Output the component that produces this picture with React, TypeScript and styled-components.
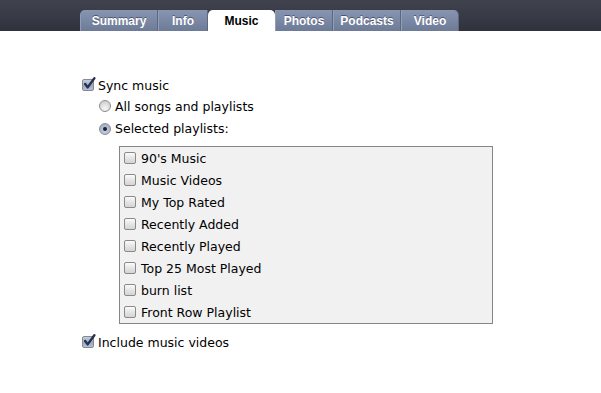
import styled, { createGlobalStyle } from 'styled-components';

const GlobalStyle = createGlobalStyle`
  html, body {
    margin: 0;
    padding: 0;
    background: #ffffff;
  }
  body {
    font-family: "DejaVu Sans", "Noto Sans", sans-serif;
    font-size: 12.5px;
    color: #000;
  }
`;

// Top bar with the device tabs
const Header = styled.div`
  height: 31px;
  display: flex;
  align-items: flex-end;
  padding-left: 80px;
  background: linear-gradient(to bottom, #40434e 0%, #373a45 60%, #2f323c 100%);
`;

const TabStrip = styled.div`
  display: flex;
  height: 21px;
`;

const Tab = styled.div<{ $active?: boolean; $first?: boolean; $last?: boolean; $w: number }>`
  width: ${(p) => p.$w}px;
  box-sizing: border-box;
  display: flex;
  align-items: center;
  justify-content: center;
  padding-top: 1px;
  font-family: "Liberation Sans", Arial, sans-serif;
  font-weight: bold;
  font-size: 12px;
  color: ${(p) => (p.$active ? '#000' : '#fff')};
  text-shadow: ${(p) => (p.$active ? 'none' : '0 -1px 0 rgba(40,48,66,0.6)')};
  background: ${(p) =>
    p.$active
      ? '#ffffff'
      : 'linear-gradient(to bottom, #8795b1 0%, #7a88a5 50%, #6e7b97 100%)'};
  border-right: ${(p) => (p.$active ? 'none' : '1px solid #5c6780')};
  border-left: ${(p) => (p.$active ? 'none' : '1px solid #909db7')};
  border-top-left-radius: ${(p) => (p.$first || p.$active ? '5px' : '0')};
  border-top-right-radius: ${(p) => (p.$last || p.$active ? '5px' : '0')};
`;

const Content = styled.div`
  padding: 43px 0 0 82px;
`;

const Row = styled.label<{ $indent?: number; $h?: number }>`
  display: flex;
  align-items: center;
  gap: 4px;
  height: ${(p) => p.$h ?? 22}px;
  padding-left: ${(p) => p.$indent ?? 0}px;
  white-space: nowrap;
`;

const ListBox = styled.div`
  margin: 5px 0 7px 37px;
  width: 374px;
  box-sizing: border-box;
  border: 1px solid #858585;
  background: #f1f1f1;
  padding: 0 0 0 4px;
`;

const ListRow = styled(Row)`
  gap: 5px;
`;

const Box = styled.span<{ $checked?: boolean }>`
  width: 12px;
  height: 12px;
  flex: none;
  box-sizing: border-box;
  border: 1px solid #8a8a8a;
  border-radius: 2px;
  position: relative;
  background: ${(p) =>
    p.$checked
      ? 'linear-gradient(to bottom, #c3cde0 0%, #9ba9c5 55%, #b3bfd6 100%)'
      : 'linear-gradient(to bottom, #fbfbfb 0%, #e3e3e3 55%, #d4d4d4 100%)'};

  svg {
    position: absolute;
    left: 0;
    top: -3px;
  }
`;

const Radio = styled.span<{ $on?: boolean }>`
  width: 12px;
  height: 12px;
  flex: none;
  box-sizing: border-box;
  border: 1px solid #8d8d8d;
  border-radius: 50%;
  display: flex;
  align-items: center;
  justify-content: center;
  background: ${(p) =>
    p.$on
      ? 'radial-gradient(circle at 50% 70%, #c6d0e2 0%, #a5b2cb 70%)'
      : 'radial-gradient(circle at 50% 75%, #f7f7f7 0%, #d2d2d2 75%)'};

  &::after {
    content: '';
    display: ${(p) => (p.$on ? 'block' : 'none')};
    width: 4px;
    height: 4px;
    border-radius: 50%;
    background: #1d2230;
  }
`;

const Check = ({ checked }: { checked?: boolean }) => (
  <Box $checked={checked}>
    {checked && (
      <svg width="13" height="13" viewBox="0 0 12 12">
        <path d="M2 6.5 L4.3 9.6 L10.5 1.2" fill="none" stroke="#24314f" strokeWidth="2.2" strokeLinecap="round" strokeLinejoin="round" />
      </svg>
    )}
  </Box>
);

const tabs = [
  { name: 'Summary', w: 78 },
  { name: 'Info', w: 50 },
  { name: 'Music', w: 67 },
  { name: 'Photos', w: 58 },
  { name: 'Podcasts', w: 68 },
  { name: 'Video', w: 58 },
];

const playlists = [
  "90's Music",
  'Music Videos',
  'My Top Rated',
  'Recently Added',
  'Recently Played',
  'Top 25 Most Played',
  'burn list',
  'Front Row Playlist',
];

export default function App() {
  return (
    <>
      <GlobalStyle />
      <Header>
        <TabStrip>
          {tabs.map((t, i) => (
            <Tab
              key={t.name}
              $w={t.w}
              $active={t.name === 'Music'}
              $first={i === 0}
              $last={i === tabs.length - 1}
            >
              {t.name}
            </Tab>
          ))}
        </TabStrip>
      </Header>
      <Content>
        <Row>
          <Check checked />
          Sync music
        </Row>
        <Row $indent={17} $h={20}>
          <Radio />
          All songs and playlists
        </Row>
        <Row $indent={17} $h={25}>
          <Radio $on />
          Selected playlists:
        </Row>
        <ListBox>
          {playlists.map((p) => (
            <ListRow key={p}>
              <Check />
              {p}
            </ListRow>
          ))}
        </ListBox>
        <Row>
          <Check checked />
          Include music videos
        </Row>
      </Content>
    </>
  );
}
